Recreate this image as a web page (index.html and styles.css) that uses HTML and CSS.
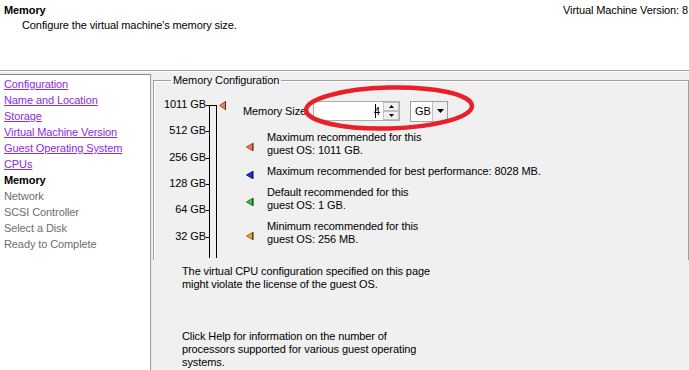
FILE: index.html
```html
<!DOCTYPE html>
<html>
<head>
<meta charset="utf-8">
<title>Memory</title>
<link rel="stylesheet" href="styles.css">
</head>
<body>
<div class="header">
  <div class="head-text">
    <div class="title">Memory</div>
    <div class="subtitle">Configure the virtual machine's memory size.</div>
  </div>
  <div class="version">Virtual Machine Version: 8</div>
</div>
<div class="sep"></div>
<div class="body">
  <nav class="nav">
    <a class="link" href="#">Configuration</a>
    <a class="link" href="#">Name and Location</a>
    <a class="link" href="#">Storage</a>
    <a class="link" href="#">Virtual Machine Version</a>
    <a class="link" href="#">Guest Operating System</a>
    <a class="link" href="#">CPUs</a>
    <span class="current">Memory</span>
    <span class="disabled">Network</span>
    <span class="disabled">SCSI Controller</span>
    <span class="disabled">Select a Disk</span>
    <span class="disabled">Ready to Complete</span>
  </nav>
  <main class="main">
    <fieldset class="group">
      <legend>Memory Configuration</legend>
      <div class="config">
        <div class="scale">
          <div class="labels">
            <div class="lbl">1011 GB<i class="tick"></i></div>
            <div class="lbl">512 GB<i class="tick"></i></div>
            <div class="lbl">256 GB<i class="tick"></i></div>
            <div class="lbl">128 GB<i class="tick"></i></div>
            <div class="lbl">64 GB<i class="tick"></i></div>
            <div class="lbl">32 GB<i class="tick"></i></div>
            <div class="lbl last">16 GB<i class="tick"></i></div>
          </div>
          <div class="track">
            <svg class="marker" width="8" height="9" viewBox="0 0 8 9"><polygon points="0.5,4.5 6.5,0.5 6.5,8.5" fill="#f27b55" stroke="#b0482b"/><line x1="6.5" y1="0" x2="6.5" y2="9" stroke="#5a2a1a"/></svg>
          </div>
        </div>
        <div class="controls">
          <div class="size-row">
            <span class="size-label">Memory Size:</span>
            <div class="spin">
              <div class="spin-input"><span class="caret"></span>4</div>
              <div class="spin-btns">
                <div class="sbtn"><svg width="5" height="3" viewBox="0 0 5 3"><polygon points="2.5,0 5,3 0,3" fill="#000"/></svg></div>
                <div class="sbtn"><svg width="5" height="3" viewBox="0 0 5 3"><polygon points="0,0 5,0 2.5,3" fill="#000"/></svg></div>
              </div>
            </div>
            <div class="combo">
              <span class="combo-val">GB</span>
              <div class="combo-btn"><svg width="7" height="4" viewBox="0 0 7 4"><polygon points="0,0 7,0 3.5,4" fill="#000"/></svg></div>
            </div>
          </div>
          <div class="legend">
            <div class="item">
              <svg class="arrow" width="8" height="8" viewBox="0 0 8 8"><polygon points="0.5,4 6.5,0.5 6.5,7.5" fill="#f27b55" stroke="#b0482b"/><line x1="7" y1="0" x2="7" y2="8" stroke="#3a2010"/></svg>
              <div class="txt">Maximum recommended for this<br>guest OS: 1011 GB.</div>
            </div>
            <div class="item">
              <svg class="arrow" width="8" height="8" viewBox="0 0 8 8"><polygon points="0.5,4 6.5,0.5 6.5,7.5" fill="#1a2ee8" stroke="#0a1890"/><line x1="7" y1="0" x2="7" y2="8" stroke="#101040"/></svg>
              <div class="txt">Maximum recommended for best performance: 8028 MB.</div>
            </div>
            <div class="item">
              <svg class="arrow" width="8" height="8" viewBox="0 0 8 8"><polygon points="0.5,4 6.5,0.5 6.5,7.5" fill="#3cc43c" stroke="#1c7a1c"/><line x1="7" y1="0" x2="7" y2="8" stroke="#103010"/></svg>
              <div class="txt">Default recommended for this<br>guest OS: 1 GB.</div>
            </div>
            <div class="item">
              <svg class="arrow" width="8" height="8" viewBox="0 0 8 8"><polygon points="0.5,4 6.5,0.5 6.5,7.5" fill="#e8a830" stroke="#9a6a10"/><line x1="7" y1="0" x2="7" y2="8" stroke="#302008"/></svg>
              <div class="txt">Minimum recommended for this<br>guest OS: 256 MB.</div>
            </div>
          </div>
        </div>
      </div>
    </fieldset>
    <svg class="circle" width="180" height="52" viewBox="0 0 180 52"><ellipse cx="90" cy="26" rx="83" ry="20.5" fill="none" stroke="#e8202a" stroke-width="4.5"/></svg>
    <div class="overlay">
      <p>The virtual CPU configuration specified on this page<br>might violate the license of the guest OS.</p>
      <p class="help">Click Help for information on the number of<br>processors supported for various guest operating<br>systems.</p>
    </div>
  </main>
</div>
</body>
</html>
```
FILE: styles.css
```css
html, body {
  margin: 0;
  padding: 0;
  height: 370px;
  overflow: hidden;
}
body {
  background: #f0f0f0;
  font-family: "Liberation Sans", Arial, sans-serif;
  font-size: 11px;
  letter-spacing: -0.1px;
  color: #000;
}
.header {
  height: 70px;
  background: #fff;
  display: flex;
  justify-content: space-between;
  align-items: flex-start;
  box-sizing: border-box;
  padding: 3px 1px 0 4px;
  line-height: 14px;
}
.title { font-weight: bold; }
.subtitle { margin-left: 18px; margin-top: 1px; }
.sep {
  border-top: 1px solid #a0a0a0;
  border-bottom: 1px solid #fff;
}
.body {
  display: flex;
  height: 298px;
  padding-top: 2px;
  position: relative;
}
.nav {
  width: 146px;
  background: #fff;
  border-top: 1px solid #828790;
  border-right: 1px solid #a0a0a0;
  border-bottom: 1px solid #d8d8d8;
  box-shadow: 1px 0 0 #e3e3e3;
  display: flex;
  flex-direction: column;
  padding: 1px 0 0 4px;
  line-height: 16px;
}
.link { color: #8b2be6; text-decoration: underline; }
.current { font-weight: bold; color: #000; }
.disabled { color: #6d6d6d; }
.main {
  flex: 1;
  margin-left: 2px;
  position: relative;
}
.group {
  margin: 0;
  padding: 0 0 0 10px;
  border: 1px solid #a0a0a0;
  box-shadow: inset 1px 1px 0 #fff;
  height: 300px;
  box-sizing: border-box;
}
.group legend {
  padding: 0 2px;
  margin-left: 7px;
  line-height: 12px;
}
.config {
  display: flex;
  padding-top: 11px;
  height: 161px;
  overflow: hidden;
}
.scale {
  display: flex;
  width: 79px;
  flex: none;
}
.labels {
  width: 45px;
  display: grid;
  grid-auto-rows: 26.33px;
  text-align: right;
}
.lbl {
  position: relative;
  padding-right: 4px;
  line-height: 14px;
  white-space: nowrap;
}
.tick {
  position: absolute;
  right: 0;
  top: 8px;
  width: 4px;
  border-top: 1px solid #000;
}
.track {
  position: relative;
  width: 6px;
  margin-top: 8px;
  border: 1px solid #000;
  border-bottom: none;
  height: 200px;
}
.marker {
  position: absolute;
  left: 9px;
  top: -5px;
}
.controls {
  display: flex;
  flex-direction: column;
}
.size-row {
  display: flex;
  align-items: center;
  margin-top: 3px;
  height: 22px;
}
.size-label { width: 70px; }
.spin {
  display: flex;
  width: 87px;
  height: 20px;
  border: 1px solid #abadb3;
  box-sizing: border-box;
  background: #fff;
}
.spin-input {
  flex: 1;
  text-align: right;
  line-height: 18px;
  padding-right: 3px;
  position: relative;
}
.caret {
  position: absolute;
  right: 7px;
  top: 2px;
  height: 14px;
  border-left: 1px solid #000;
}
.spin-btns {
  width: 16px;
  display: flex;
  flex-direction: column;
}
.sbtn {
  flex: 1;
  background: #f0f0f0;
  border: 1px solid #c0c0c0;
  display: flex;
  align-items: center;
  justify-content: center;
}
.combo {
  display: flex;
  margin-left: 10px;
  width: 38px;
  height: 21px;
  border: 1px solid #a0a0a0;
  box-sizing: border-box;
  background: #fff;
  align-items: stretch;
}
.combo-val { flex: 1; line-height: 19px; padding-left: 4px; }
.combo-btn {
  width: 14px;
  background: #f0f0f0;
  border-left: 1px solid #c0c0c0;
  display: flex;
  align-items: center;
  justify-content: center;
}
.legend {
  display: flex;
  flex-direction: column;
  gap: 8px;
  margin-top: 9px;
}
.item {
  display: flex;
  align-items: center;
  line-height: 13px;
}
.arrow { margin: 3px 13px -3px 3px; flex: none; }
.circle {
  position: absolute;
  left: 146px;
  top: 8px;
  transform: rotate(-1.5deg);
}
.overlay {
  position: absolute;
  left: -1px;
  right: 0;
  top: 186px;
  bottom: 0;
  background: #f0f0f0;
  padding: 5px 0 0 30px;
  line-height: 13px;
}
.overlay p { margin: 0; }
.overlay .help { margin-top: 39px; }
```
